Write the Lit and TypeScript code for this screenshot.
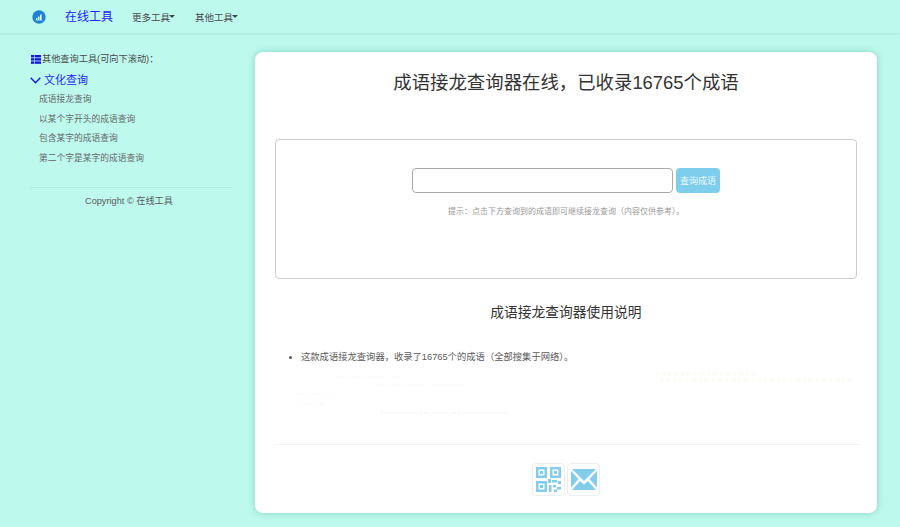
import { LitElement, html, css } from "lit";
import { customElement } from "lit/decorators.js";

@customElement("app-root")
export class AppRoot extends LitElement {
  static styles = css`
    :host { display: block; height: 527px; overflow: hidden; background: #bdf9ed; font-family: "Liberation Sans", "Noto Sans CJK SC", sans-serif; color: #555; }
    * { box-sizing: border-box; }
    a { text-decoration: none; color: inherit; }
    .nav { height: 33px; display: flex; align-items: center; padding-left: 32px; box-shadow: 0 1px 2px rgba(90,170,160,.22); }
    .logo { width: 14px; height: 14px; display: block; }
    .brand { margin-left: 19px; color: #2424ff; font-size: 12px; line-height: 16px; width: 67px; }
    .menu { font-size: 9.5px; color: #4a4a4a; display: flex; align-items: center; width: 63px; }
    .caret { width: 0; height: 0; border-left: 3px solid transparent; border-right: 3px solid transparent; border-top: 3px solid #444; margin-left: -1px; }
    .main { display: flex; padding: 19px 24px 14px 30px; gap: 23px; height: 494px; }
    .side { width: 202px; flex: none; display: flex; flex-direction: column; }
    .side-title { font-size: 9.2px; line-height: 14px; padding-left: 1px; display: flex; align-items: center; gap: 1px; color: #4a4a4a; }
    .group { display: flex; align-items: center; gap: 3px; margin-top: 5px; color: #2424ff; font-size: 11px; line-height: 18px; }
    .links { list-style: none; margin: 0; padding: 0 0 0 9px; font-size: 8.75px; color: #666; }
    .links li { height: 19.7px; line-height: 20px; }
    .copy { margin-top: 19px; border-top: 1px solid #b0eee2; padding: 7px 4px 0 0; text-align: center; font-size: 9.2px; line-height: 13px; color: #5a5a5a; }
    .card { flex: 1; background: #fff; border-radius: 8px; box-shadow: 0 0 6px rgba(80,170,155,.5); padding: 0 20px; display: flex; flex-direction: column; height: 461px; }
    h1 { margin: 18px 0 0; font-weight: 400; font-size: 18.4px; line-height: 25px; text-align: center; color: #333; }
    .box { margin-top: 44px; height: 140px; border: 1px solid #ccc; border-radius: 4px; display: flex; flex-direction: column; align-items: center; padding-top: 28px; }
    .row { display: flex; gap: 3px; }
    .input { width: 261px; height: 25px; border: 1px solid #aaa; border-radius: 4px; background: #fff; }
    .btn { width: 44px; height: 25px; border-radius: 4px; background: #7fcdec; color: #eafaff; font-size: 9px; display: flex; align-items: center; justify-content: center; }
    .hint { margin-top: 13px; font-size: 8px; line-height: 11px; color: #999; }
    h2 { margin: 24px 0 0; font-weight: 400; font-size: 13.75px; line-height: 19px; text-align: center; color: #333; }
    .usage { margin: 28px 0 0; padding: 0 0 0 26px; font-size: 9.3px; line-height: 14px; color: #5a5a5a; }
    .smudge { display: block; width: 582px; height: 66px; }
    .foot { border-top: 1px solid #f2f2f2; margin: 14px -2px 0; padding-top: 18px; display: flex; justify-content: center; gap: 2px; }
    .tile { width: 33px; height: 33px; border: 1px solid #eee; border-radius: 4px; display: flex; align-items: center; justify-content: center; }
    .tile svg { display: block; }
  `;

  render() {
    const blue = "#82cdec";
    return html`
      <div class="nav">
        <svg class="logo" viewBox="0 0 14 14">
          <circle cx="7" cy="7" r="6.7" fill="#1f80d6"/>
          <rect x="4" y="8" width="1.4" height="2" fill="#dff"/>
          <rect x="6" y="6.5" width="1.4" height="3.5" fill="#dff"/>
          <rect x="8" y="4.5" width="1.6" height="5.5" fill="#dff"/>
          <rect x="3.5" y="10.2" width="7" height=".7" fill="#9cd"/>
        </svg>
        <a class="brand">在线工具</a>
        <a class="menu">更多工具<i class="caret"></i></a>
        <a class="menu">其他工具<i class="caret"></i></a>
      </div>
      <div class="main">
        <aside class="side">
          <div class="side-title">
            <svg width="10" height="9" viewBox="0 0 10 9"><g fill="#1414e6"><rect width="3" height="2.4"/><rect x="3.6" width="6.4" height="2.4"/><rect y="3.2" width="3" height="2.4"/><rect x="3.6" y="3.2" width="6.4" height="2.4"/><rect y="6.4" width="3" height="2.4"/><rect x="3.6" y="6.4" width="6.4" height="2.4"/></g></svg>
            其他查询工具(可向下滚动)：
          </div>
          <div class="group">
            <svg width="11" height="7" viewBox="0 0 11 7"><path d="M.7.8 5.5 5.8 10.3.8" fill="none" stroke="#1414e6" stroke-width="1.3"/></svg>
            文化查询
          </div>
          <ul class="links">
            <li>成语接龙查询</li>
            <li>以某个字开头的成语查询</li>
            <li>包含某字的成语查询</li>
            <li>第二个字是某字的成语查询</li>
          </ul>
          <div class="copy">Copyright © 在线工具</div>
        </aside>
        <section class="card">
          <h1>成语接龙查询器在线，已收录16765个成语</h1>
          <div class="box">
            <div class="row"><div class="input"></div><a class="btn">查询成语</a></div>
            <div class="hint">提示：点击下方查询到的成语即可继续接龙查询（内容仅供参考）。</div>
          </div>
          <h2>成语接龙查询器使用说明</h2>
          <ul class="usage"><li>这款成语接龙查询器，收录了16765个的成语（全部搜集于网络）。</li></ul>
          <svg class="smudge" viewBox="0 0 582 66" fill="none" stroke-width="2" stroke-dasharray="3 2 6 2">
            <path d="M60 13H130M100 21H190M20 30H60M25 40H50" stroke="#fcfcfa"/>
            <path d="M105 49H235" stroke="#f9f9f6"/>
            <path d="M380 10H480M385 16H580" stroke="#fcfcf7" stroke-width="3"/>
          </svg>
          <div class="foot">
            <a class="tile">
              <svg width="25" height="25" viewBox="0 0 25 25" fill="${blue}">
                <path fill-rule="evenodd" d="M0 0h11v11H0zM2.5 2.5v6h6v-6zM14 0h11v11H14zM16.5 2.5v6h6v-6zM0 14h11v11H0zM2.5 16.5v6h6v-6z"/>
                <rect x="4" y="4" width="3" height="3"/><rect x="18" y="4" width="3" height="3"/><rect x="4" y="18" width="3" height="3"/>
                <rect x="12" y="12" width="3" height="4"/><rect x="16" y="13" width="5" height="2.5"/><rect x="22" y="14" width="3" height="3"/>
                <rect x="13" y="18" width="2.5" height="7"/><rect x="17" y="18" width="3" height="2.5"/><rect x="21" y="20" width="4" height="2.5"/><rect x="18" y="22.5" width="3" height="2.5"/>
              </svg>
            </a>
            <a class="tile">
              <svg width="26" height="21" viewBox="0 0 26 21" fill="${blue}">
                <path d="M1 0h24L13 12z"/>
                <path d="M0 2l7.5 8L0 18.5zM26 2v16.5l-7.5-8.5z"/>
                <path d="M9 12l4 3.5 4-3.5 8 9H1z"/>
              </svg>
            </a>
          </div>
        </section>
      </div>
    `;
  }
}
